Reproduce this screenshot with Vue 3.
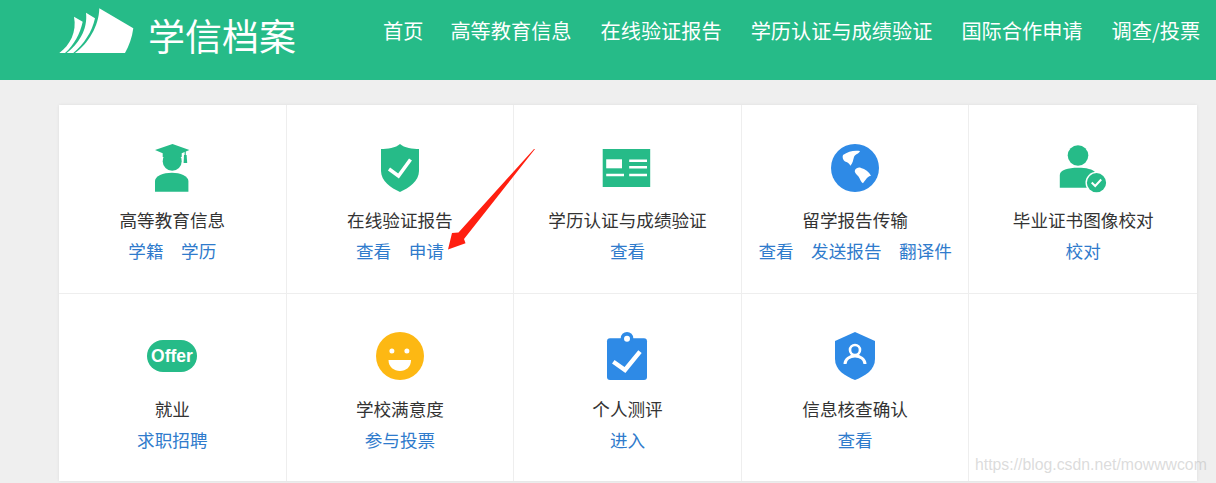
<script setup>
const navItems = ['首页', '高等教育信息', '在线验证报告', '学历认证与成绩验证', '国际合作申请', '调查/投票']
const cells = [
  { icon: 'grad', title: '高等教育信息', links: ['学籍', '学历'] },
  { icon: 'shield', title: '在线验证报告', links: ['查看', '申请'] },
  { icon: 'news', title: '学历认证与成绩验证', links: ['查看'] },
  { icon: 'globe', title: '留学报告传输', links: ['查看', '发送报告', '翻译件'] },
  { icon: 'person', title: '毕业证书图像校对', links: ['校对'] },
  { icon: 'offer', title: '就业', links: ['求职招聘'] },
  { icon: 'smile', title: '学校满意度', links: ['参与投票'] },
  { icon: 'clip', title: '个人测评', links: ['进入'] },
  { icon: 'idshield', title: '信息核查确认', links: ['查看'] },
  { icon: '', title: '', links: [] },
]
</script>

<template>
  <div class="page">
    <header class="header">
      <div class="brand">
        <svg class="brand-logo" width="76" height="46" viewBox="0 0 76 46">
          <path fill="#fff" d="M16 45C29 36 40 18 40.3 .3L74.3 20.3C73 30 70 38 66 45Z" />
          <path fill="#fff" d="M7.7 45C19 36 29 22 27 4.7L36 10.3C33 24 25 36 14.3 45Z" />
          <path fill="#fff" d="M.3 45C11 37 18 24 15 8.7L23.7 13.7C21 26 15 37 6 45Z" />
        </svg>
        <span class="brand-name">学信档案</span>
      </div>
      <nav class="nav">
        <a v-for="item in navItems" :key="item" class="nav-item">{{ item }}</a>
      </nav>
    </header>

    <main class="card">
      <section v-for="(cell, i) in cells" :key="i" class="cell">
        <svg v-if="cell.icon" class="icon" width="50" height="50" viewBox="0 0 50 50">
          <g v-if="cell.icon === 'grad'" fill="#26bb88">
            <circle cx="25.2" cy="18.2" r="9.5" />
            <path d="M8 48.7V38C8 33 16 29.7 25 29.7C33 29.7 41.4 33 41.4 38V48.7Z" />
            <path d="M25.5 1L42.4 7L34.7 10.2V14H15.7V10.3L8 7Z" />
            <rect x="37.6" y="8" width="1.2" height="5" />
            <path d="M37 12H39.6L40.2 20H36.6Z" />
          </g>
          <g v-else-if="cell.icon === 'shield'">
            <path fill="#26bb88" d="M25 1C29 5 38 6 44 6V28C44 38 34 45 25 49C16 45 6 38 6 28V6C12 6 21 5 25 1Z" />
            <path fill="none" stroke="#fff" stroke-width="3.6" d="M14 26L23.5 33L35.5 16.5" />
          </g>
          <g v-else-if="cell.icon === 'news'">
            <rect x=".7" y="6" width="47.5" height="38" fill="#26bb88" />
            <rect x="4.2" y="16.3" width="15.8" height="9" fill="#fff" />
            <path stroke="#fff" stroke-width="2.4" d="M27.2 17.7H45M27.2 24.3H45M4.2 32H22M27.2 32H45" />
          </g>
          <g v-else-if="cell.icon === 'globe'">
            <circle cx="25" cy="25" r="24" fill="#2e8ae6" />
            <path fill="#fff" d="M13 12C18 8 25 7 30 8C29 11 25 11 24 14C23 17 23 20 20.5 22.7C19 20 17 19 15 18.5C13 17 12 14 13 12Z" />
            <path fill="#fff" d="M25 27C26 25 29 24 31 25C35 26 39 29 41 32.7C38 33 36 36 33 40.3C30 38 30 35 28 33C26 31 24 29 25 27Z" />
          </g>
          <g v-else-if="cell.icon === 'person'">
            <circle cx="20" cy="12.5" r="10.3" fill="#26bb88" />
            <path fill="#26bb88" d="M1.8 44.7V32C1.8 27 10 24.7 20 24.7C28 24.7 35 26 38 30V44.7Z" />
            <circle cx="38.5" cy="39.7" r="11" fill="#fff" />
            <circle cx="38.5" cy="39.7" r="9.6" fill="#26bb88" />
            <path fill="none" stroke="#fff" stroke-width="2" d="M33.7 39.5L37.2 43L43.2 36.5" />
          </g>
          <g v-else-if="cell.icon === 'offer'">
            <rect x="0" y="8" width="50" height="32" rx="16" fill="#26bb88" />
            <text x="25" y="29.5" text-anchor="middle" class="offer-text">Offer</text>
          </g>
          <g v-else-if="cell.icon === 'smile'">
            <circle cx="25" cy="24" r="24" fill="#fdb813" />
            <circle cx="16.9" cy="19" r="2.5" fill="#fff" />
            <circle cx="31.9" cy="19" r="2.5" fill="#fff" />
            <path fill="#fff" d="M13.5 28H36C36 35 31 39 25 39C19 39 13.5 35 13.5 28Z" />
          </g>
          <g v-else-if="cell.icon === 'clip'">
            <rect x="5" y="6.3" width="40" height="41.7" rx="3" fill="#2e8ae6" />
            <circle cx="25" cy="6.3" r="6.3" fill="#2e8ae6" />
            <circle cx="25" cy="6.8" r="3" fill="#fff" />
            <path fill="none" stroke="#fff" stroke-width="4.4" d="M11.3 29.7L23 38L38 19.7" />
          </g>
          <g v-else-if="cell.icon === 'idshield'">
            <path fill="#2e8ae6" d="M25 0L45 9V27C45 38 35 44 25 48C15 44 5 38 5 27V9Z" />
            <circle cx="25" cy="18" r="5" fill="none" stroke="#fff" stroke-width="2.6" />
            <path fill="none" stroke="#fff" stroke-width="3" d="M15 32C15 27 20 24 25 24C30 24 35 27 35 32" />
          </g>
        </svg>
        <h3 v-if="cell.title" class="title">{{ cell.title }}</h3>
        <div v-if="cell.links.length" class="links">
          <a v-for="link in cell.links" :key="link" class="link">{{ link }}</a>
        </div>
      </section>
    </main>

    <svg class="arrow" width="100" height="110" viewBox="0 0 100 110">
      <path fill="#ff1f10" d="M87 1L16 91L17.5 95.3L0 101.5L4 85L10.5 84.5L86 1Z" />
    </svg>
    <span class="watermark">https://blog.csdn.net/mowwwcom</span>
  </div>
</template>

<style scoped>
.page {
  position: relative;
  width: 1216px;
  height: 483px;
  overflow: hidden;
  background: #efefef;
  font-family: "Noto Sans CJK SC", "Liberation Sans", sans-serif;
}
.header {
  display: flex;
  height: 80px;
  padding-left: 59px;
  background: #26bb88;
  color: #fff;
}
.brand {
  display: flex;
  align-items: flex-start;
  gap: 13px;
  padding-top: 8px;
}
.brand-logo {
  display: block;
}
.brand-name {
  font-size: 37px;
  line-height: 54px;
  font-weight: 400;
}
.nav {
  display: flex;
  gap: 29px;
  margin-left: 87px;
}
.nav-item {
  font-size: 20.2px;
  line-height: 62px;
  white-space: nowrap;
}
.nav-item:first-child {
  margin-right: -2px;
}
.card {
  display: grid;
  grid-template-columns: repeat(5, 1fr);
  grid-template-rows: 189px 187px;
  width: 1138px;
  margin: 25px 0 0 59px;
  background: #fff;
  box-shadow: 0 0 3px rgba(0, 0, 0, 0.08);
}
.cell {
  display: flex;
  flex-direction: column;
  align-items: center;
  padding-top: 38px;
  box-sizing: border-box;
  border-right: 1px solid #eeeeee;
  border-bottom: 1px solid #eeeeee;
}
.cell:nth-child(5n) {
  border-right: 0;
}
.cell:nth-child(n + 6) {
  border-bottom: 0;
}
.icon {
  display: block;
  overflow: visible;
}
.offer-text {
  font-family: "Liberation Sans", sans-serif;
  font-weight: 700;
  font-size: 17.5px;
  fill: #fff;
}
.title {
  margin: 13px 0 0;
  font-size: 17.6px;
  font-weight: 400;
  line-height: 28px;
  color: #333;
  white-space: nowrap;
}
.links {
  display: flex;
  gap: 17.5px;
  margin-top: 2px;
}
.link {
  font-size: 17.6px;
  line-height: 30px;
  color: #2f7bcc;
  white-space: nowrap;
}
.arrow {
  position: absolute;
  left: 448px;
  top: 148px;
}
.watermark {
  position: absolute;
  left: 975px;
  top: 456px;
  font-family: "Liberation Sans", sans-serif;
  font-size: 15.8px;
  line-height: 18px;
  color: rgba(190, 190, 190, 0.55);
  white-space: nowrap;
}
</style>
